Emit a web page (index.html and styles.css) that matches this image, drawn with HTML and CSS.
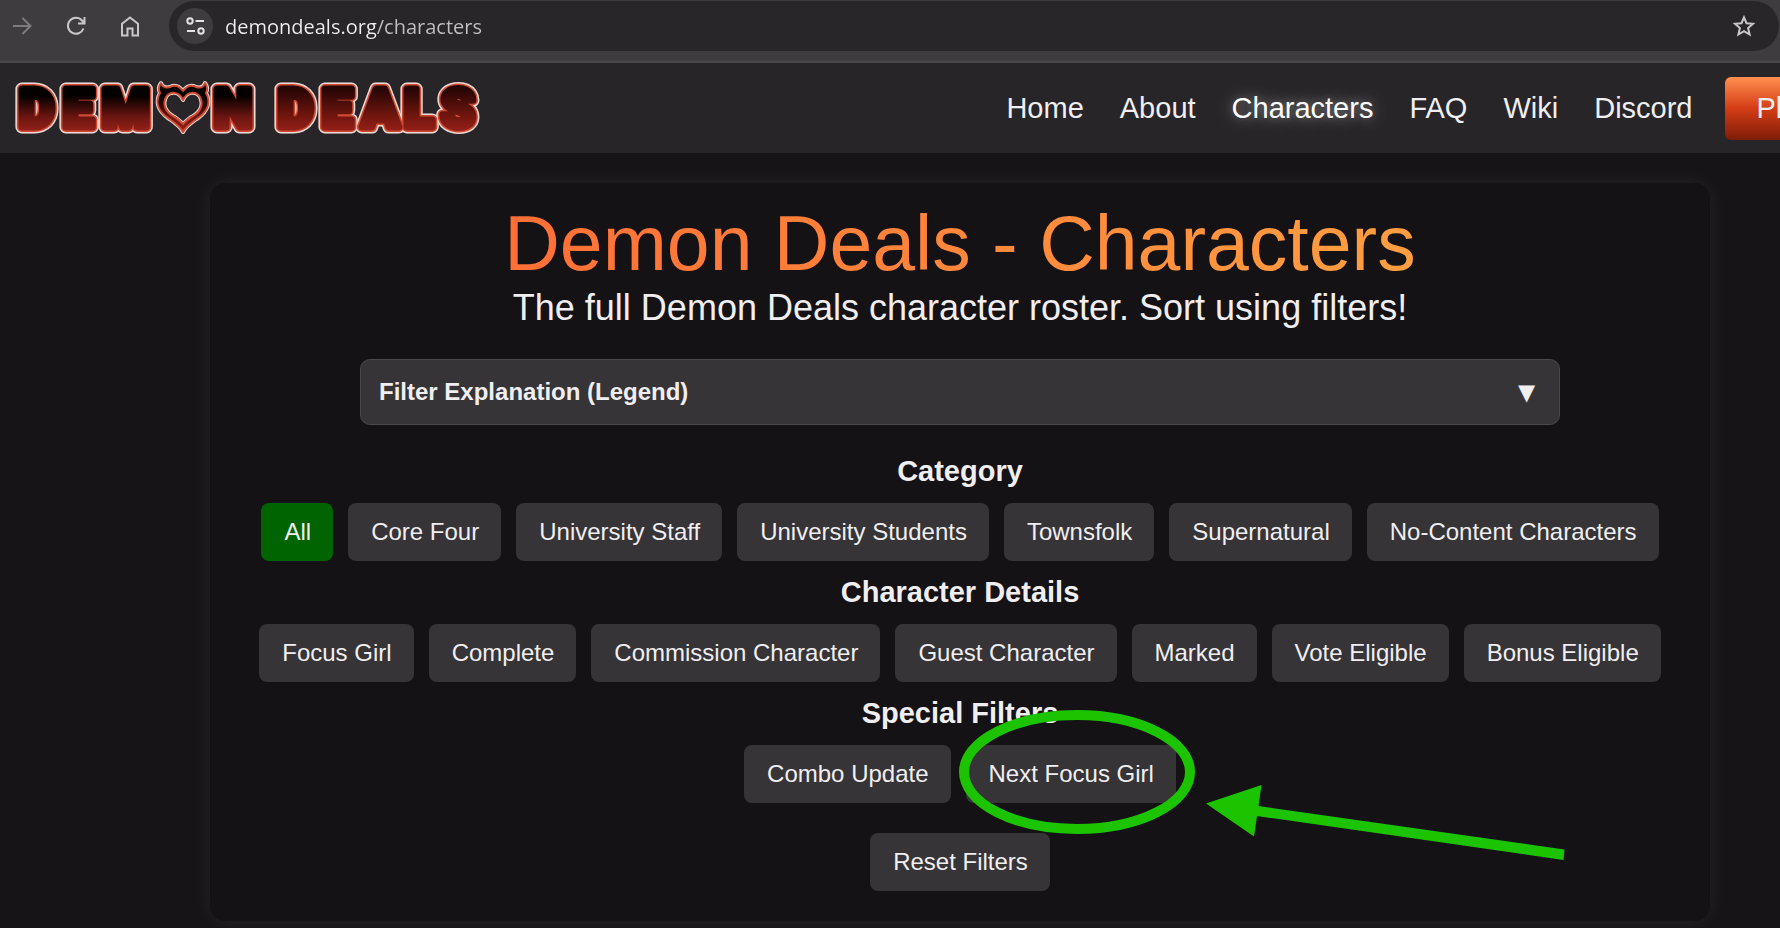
FILE: index.html
```html
<!DOCTYPE html>
<html lang="en" dir="ltr">
<head>
    <meta charset="utf-8">
    <title>Demon Deals - Characters</title>
    <link rel="stylesheet" href="styles.css">
</head>
<body>
    <div class="toolbar">
        <div class="toolbar-actions">
            <button class="tool disabled" aria-label="Forward">
                <svg width="24" height="24" viewBox="0 0 24 24"><path d="M3 12H20M12.500 4L20.500 12L12.500 20" /></svg>
            </button>
            <button class="tool" aria-label="Reload">
                <svg width="24" height="24" viewBox="0 0 24 24"><path d="M19.500 14.500A8 8 0 1 1 18 6.500L20 8.800M20.500 3V9.500H14" /></svg>
            </button>
            <button class="tool" aria-label="Home">
                <svg width="24" height="24" viewBox="0 0 24 24"><path d="M4 9.800L12 3.500L20 9.800V21.500H14.500V14.500H9.500V21.500H4Z" /></svg>
            </button>
        </div>
        <div class="address">
            <button class="site-info" aria-label="Site information">
                <svg width="24" height="24" viewBox="0 0 24 24"><circle cx="7" cy="7" r="2.700" /><path d="M12.500 7H21M4 17H12" /><circle cx="18" cy="17" r="2.700" /></svg>
            </button>
            <input class="url" type="text" aria-label="Address" value="demondeals.org/characters">
            <button class="tool" aria-label="Bookmark">
                <svg width="24" height="24" viewBox="0 0 24 24"><path d="M12 3.300L14.500 9.200L21 9.800L16.100 14.100L17.600 20.500L12 17.100L6.400 20.500L7.900 14.100L3 9.800L9.500 9.200Z" /></svg>
            </button>
        </div>
    </div>

    <div class="page">
        <header class="site-header">
            <a class="logo" href="#" aria-label="Demon Deals">
                <svg width="468" height="56" viewBox="0 0 468 56">
                    <defs>
                        <linearGradient id="demon-fill" gradientUnits="userSpaceOnUse" x1="0" y1="4" x2="0" y2="52">
                            <stop offset="0.250" stop-color="#050000" />
                            <stop offset="0.700" stop-color="#6e1611" />
                            <stop offset="1" stop-color="#96211a" />
                        </linearGradient>
                        <linearGradient id="deals-fill" gradientUnits="userSpaceOnUse" x1="0" y1="4" x2="0" y2="52">
                            <stop offset="0.100" stop-color="#260505" />
                            <stop offset="0.700" stop-color="#75170f" />
                            <stop offset="1" stop-color="#96211a" />
                        </linearGradient>
                        <g id="demon">
                            <text x="5 49 88" y="47">DEM</text>
                            <text x="200" y="47">N</text>
                        </g>
                        <text id="deals" x="264 308 348 390 427" y="47">DEALS</text>
                        <!-- horned heart that stands in for the O -->
                        <path id="heart" fill-rule="evenodd" d="M147 3C149 8 153 8 156 7C162 4 166 7 169 11C172 7 176 4 182 7C185 8 189 8 191 3C194 7 193 11 192 13C197 22 194 31 184 38C177 43 172 46 169 52C166 46 161 43 154 38C144 31 141 22 146 13C145 11 144 7 147 3ZM169 20C165 11 156 11 152 17C148 25 152 32 159 36C163 38 166 41 169 44C172 41 175 38 179 36C186 32 190 25 186 17C182 11 173 11 169 20Z" />
                    </defs>
                    <use class="glow" href="#demon" />
                    <use class="glow" href="#deals" />
                    <use class="edge" href="#demon" />
                    <use class="edge" href="#deals" />
                    <use class="face demon-face" href="#demon" />
                    <use class="face deals-face" href="#deals" />
                    <use class="heart-glow" href="#heart" />
                    <use class="heart-edge" href="#heart" />
                </svg>
            </a>
            <nav class="site-nav">
                <a href="#">Home</a>
                <a href="#">About</a>
                <a href="#" class="current">Characters</a>
                <a href="#">FAQ</a>
                <a href="#">Wiki</a>
                <a href="#">Discord</a>
                <a href="#" class="play">Play Now</a>
            </nav>
        </header>

        <main class="card">
            <h1>Demon Deals - Characters</h1>
            <p class="intro">The full Demon Deals character roster. Sort using filters!</p>

            <button class="legend" aria-expanded="false">
                <span>Filter Explanation (Legend)</span>
                <span class="caret">▼</span>
            </button>

            <h2>Category</h2>
            <div class="filters">
                <button class="filter active">All</button>
                <button class="filter">Core Four</button>
                <button class="filter">University Staff</button>
                <button class="filter">University Students</button>
                <button class="filter">Townsfolk</button>
                <button class="filter">Supernatural</button>
                <button class="filter">No-Content Characters</button>
            </div>

            <h2>Character Details</h2>
            <div class="filters">
                <button class="filter">Focus Girl</button>
                <button class="filter">Complete</button>
                <button class="filter">Commission Character</button>
                <button class="filter">Guest Character</button>
                <button class="filter">Marked</button>
                <button class="filter">Vote Eligible</button>
                <button class="filter">Bonus Eligible</button>
            </div>

            <h2>Special Filters</h2>
            <div class="filters">
                <button class="filter">Combo Update</button>
                <div class="marked">
                    <button class="filter">Next Focus Girl</button>
                    <svg class="annotation" width="606" height="151" viewBox="0 0 606 151">
                        <ellipse cx="118" cy="62" rx="113" ry="57" />
                        <path d="M247 93.500L302.500 75L299.500 96L605.500 139.500L604.500 150L298 106L295 126.500Z" />
                    </svg>
                </div>
            </div>

            <div class="filters reset">
                <button class="filter">Reset Filters</button>
            </div>
        </main>
    </div>
</body>
</html>
```
FILE: styles.css
```css
* {
    box-sizing: border-box;
}
body {
    margin: 0;
    overflow: hidden;
    background: #161417;
    color: #f0eef0;
    font-family: "Liberation Sans", Arial, sans-serif;
}
button {
    border: none;
    background: none;
    color: inherit;
    font-family: inherit;
    cursor: pointer;
}

/* browser bar */
.toolbar {
    display: flex;
    gap: 27px;
    height: 63px;
    padding: 1px 1px 10px 10px;
    background: #3e3c3f;
    border-bottom: 2px solid #4a484b;
}
.toolbar-actions {
    display: flex;
    align-items: center;
    gap: 30px;
}
.tool {
    height: 24px;
    padding: 0;
    color: #c9c7ca;
}
.tool.disabled {
    color: #7d7b7e;
}
.toolbar svg {
    display: block;
    fill: none;
    stroke: currentColor;
    stroke-width: 2;
}
.address {
    flex: 1;
    display: flex;
    align-items: center;
    gap: 12px;
    padding: 0 23px 0 8px;
    border-radius: 26px;
    background: #282629;
}
.site-info {
    display: flex;
    align-items: center;
    justify-content: center;
    width: 36px;
    height: 36px;
    padding: 0;
    border-radius: 50%;
    background: #3e3c3f;
    color: #e3e1e4;
}
.url {
    flex: 1;
    padding: 0;
    border: none;
    outline: none;
    font: 20px "Open Sans", "Noto Sans", sans-serif;
    /* host is brighter than the path */
    background: linear-gradient(90deg, #f0eef1 151px, #c2c0c3 151px);
    -webkit-background-clip: text;
    background-clip: text;
    color: transparent;
}

/* site is wider than the window and runs off its right edge */
.page {
    margin-right: -140px;
}
.site-header {
    display: flex;
    align-items: center;
    justify-content: space-between;
    height: 90px;
    padding: 0 9px 0 14px;
    background: #272528;
}
.logo svg {
    display: block;
    font: 900 54px Roboto, sans-serif;
    stroke-linejoin: round;
}
.glow {
    fill: #ecd9d6;
    stroke: #ecd9d6;
    stroke-width: 13px;
}
.edge {
    fill: #cf4a30;
    stroke: #cf4a30;
    stroke-width: 10px;
}
.face {
    stroke-width: 7px;
}
.demon-face {
    fill: url(#demon-fill);
    stroke: url(#demon-fill);
}
.deals-face {
    fill: url(#deals-fill);
    stroke: url(#deals-fill);
}
.heart-glow {
    fill: none;
    stroke: #ecd9d6;
    stroke-width: 4px;
}
.heart-edge {
    fill: url(#demon-fill);
    stroke: #cf4a30;
    stroke-width: 2px;
}
.site-nav {
    display: flex;
    align-items: center;
    gap: 36px;
    font-size: 29px;
    line-height: 33px;
}
.site-nav a {
    color: #f0eef0;
    text-decoration: none;
    white-space: nowrap;
}
.site-nav .current {
    color: #fff;
    text-shadow: 0 0 10px rgba(255, 255, 255, 0.3), 0 0 20px rgba(255, 255, 255, 0.4);
}
.site-nav .play {
    margin-left: -4px;
    padding: 15px 32px;
    border-radius: 6px;
    background: linear-gradient(#ff9050, #d43c15 50%, #7d1c08);
}

.card {
    max-width: 1500px;
    margin: 30px auto;
    padding: 16px 30px 30px;
    border-radius: 15px;
    background: #141215;
    box-shadow: 0 0 20px rgba(255, 255, 255, 0.07);
    text-align: center;
}
h1 {
    width: fit-content;
    margin: 0 auto;
    font-size: 77px;
    font-weight: normal;
    line-height: 88px;
    background: linear-gradient(90deg, #ff6f36, #ff9e40);
    -webkit-background-clip: text;
    background-clip: text;
    color: transparent;
}
.intro {
    margin: 0 0 30px;
    font-size: 36px;
    line-height: 42px;
}
.legend {
    display: flex;
    align-items: center;
    justify-content: space-between;
    width: 100%;
    max-width: 1200px;
    height: 66px;
    margin: 0 auto 30px;
    padding: 0 18px;
    border: 1px solid #4a484b;
    border-radius: 10px;
    background: #363436;
    font-size: 24px;
    font-weight: bold;
}
.caret {
    font-size: 29px;
    line-height: 33px;
}
h2 {
    margin: 15px 0;
    font-size: 29px;
    line-height: 33px;
}
.filters {
    display: flex;
    flex-wrap: wrap;
    justify-content: center;
    gap: 15px;
}
.filter {
    height: 58px;
    padding: 0 22px 0 23px;
    border-radius: 8px;
    background: #363436;
    font-size: 24px;
}
.filter.active {
    background: #006400;
}
.reset {
    margin-top: 30px;
}

/* hand-drawn ring and arrow over the filter */
.marked {
    position: relative;
}
.annotation {
    position: absolute;
    left: -7px;
    top: -35px;
    fill: #1cc400;
    pointer-events: none;
}
.annotation ellipse {
    fill: none;
    stroke: #1cc400;
    stroke-width: 10px;
}
```
